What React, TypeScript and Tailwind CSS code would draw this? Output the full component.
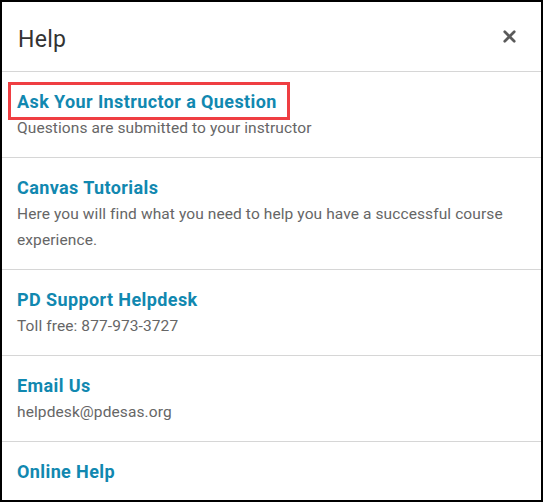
import { X } from 'lucide-react';

const items = [
  { title: 'Ask Your Instructor a Question', text: 'Questions are submitted to your instructor', marked: true },
  { title: 'Canvas Tutorials', text: 'Here you will find what you need to help you have a successful course experience.' },
  { title: 'PD Support Helpdesk', text: 'Toll free: 877-973-3727' },
  { title: 'Email Us', text: 'helpdesk@pdesas.org' },
  { title: 'Online Help' },
];

export default function App() {
  return (
    <div
      className="w-[543px] h-[502px] border-2 border-black bg-white overflow-hidden"
      style={{ fontFamily: 'Roboto, Lato, sans-serif' }}
    >
      {/* Header */}
      <div className="flex items-center justify-between h-[70px] pl-[16px] pr-[22px] border-b border-[#d6d6d6]">
        <h1 className="mt-[8px] text-[23px] tracking-[0.3px] text-[#333] font-normal">Help</h1>
        <button className="text-[#5a5a5a]">
          <X className="w-[19px] h-[19px]" strokeWidth={3.4} />
        </button>
      </div>

      <ul>
        {items.map((item) => (
          <li key={item.title} className="px-[15px] py-4 border-b border-[#d6d6d6] last:border-b-0">
            <div className={item.marked ? 'relative inline-block' : ''}>
              {item.marked && (
                <span className="absolute -left-[9px] -right-[13px] -top-[6px] -bottom-[5px] border-[3px] border-[#ef3e42]" />
              )}
              <a className="block text-[18px] leading-[27px] tracking-[0.4px] font-bold text-[#1188b0]">{item.title}</a>
            </div>
            {item.text && (
              <p className="text-[15.5px] leading-[26px] tracking-[0.1px] text-[#666]">{item.text}</p>
            )}
          </li>
        ))}
      </ul>
    </div>
  );
}
